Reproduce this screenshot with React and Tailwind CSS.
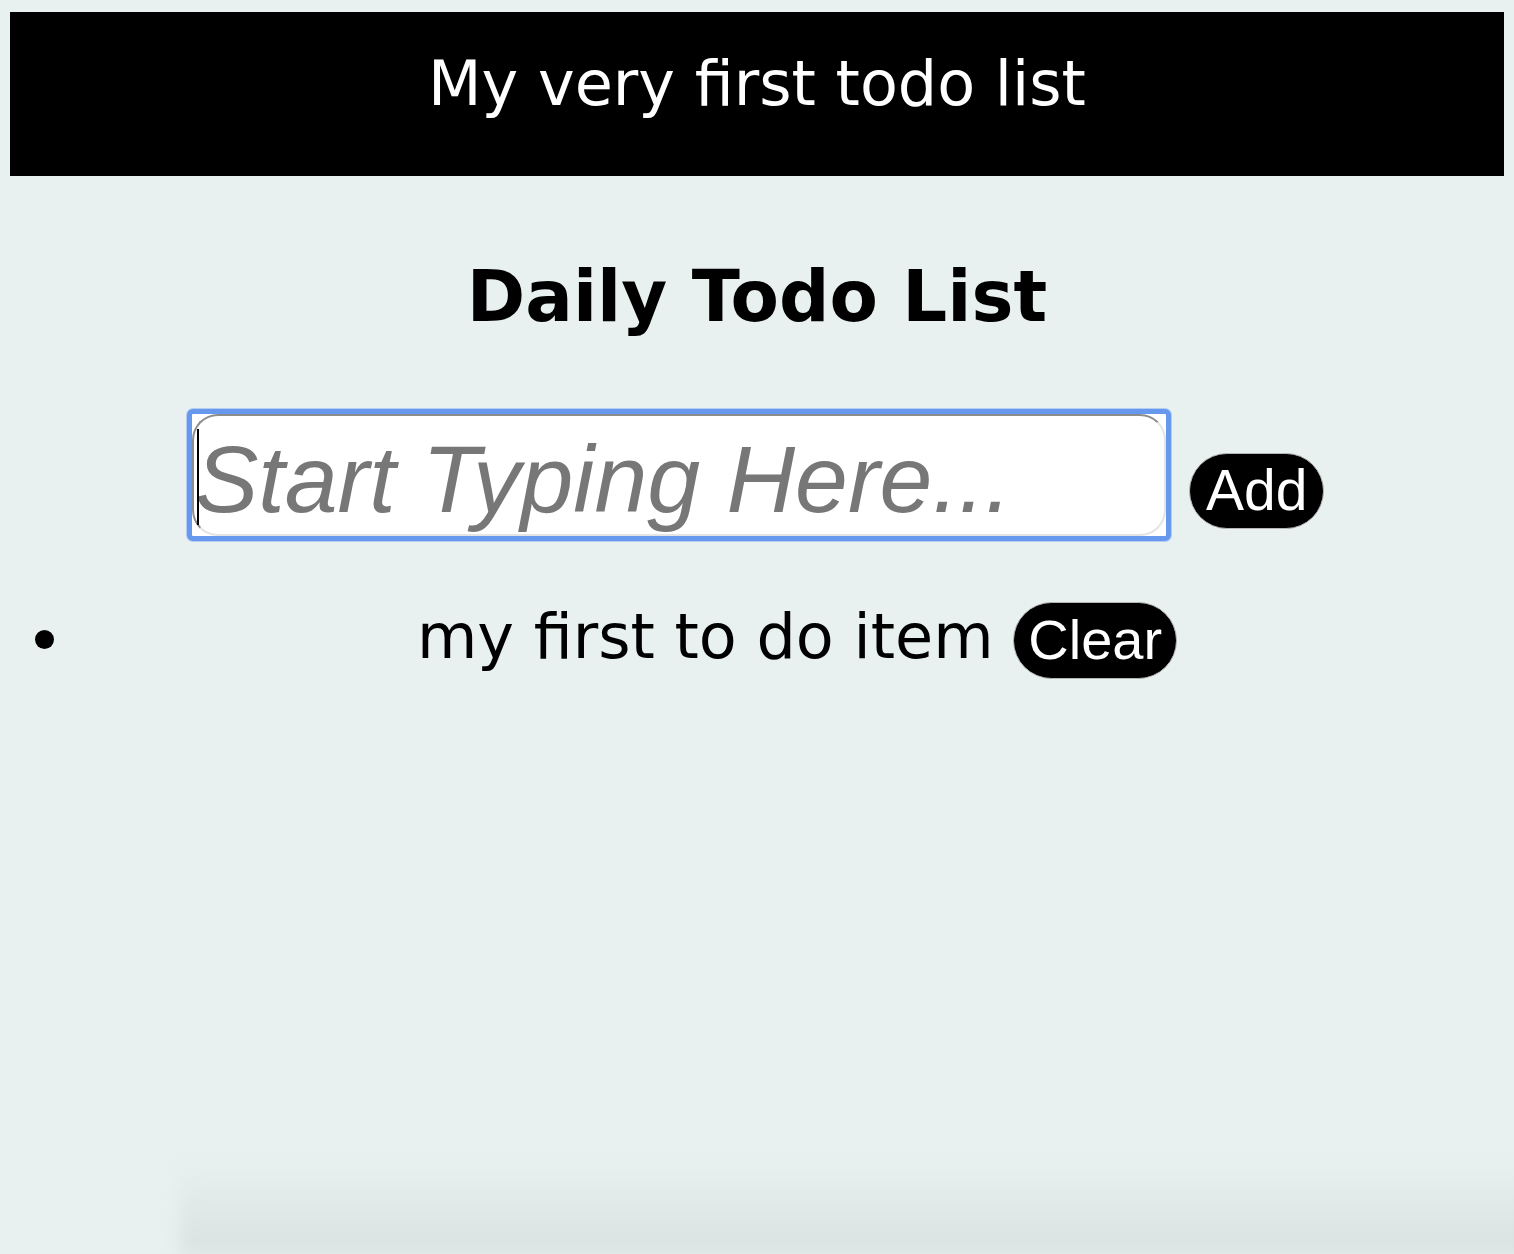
import React from "react";

export default function App() {
  return (
    <div className="relative min-h-screen overflow-hidden bg-[#e8f1f0] pt-[12px] [font-family:'DejaVu_Sans',sans-serif]">
      <header className="mx-[10px] flex h-[164px] items-center justify-center bg-black">
        <h1 className="pb-[20px] text-[62px] font-normal leading-none text-white [font-family:'DejaVu_Sans',sans-serif]">
          My very first todo list
        </h1>
      </header>

      <h2 className="mt-[86px] text-center text-[70.5px] font-bold leading-none text-black [font-family:'DejaVu_Sans',sans-serif]">
        Daily Todo List
      </h2>

      <div className="ml-[187px] mt-[76px] flex items-end">
        <div className="relative rounded-[6px] border-[5px] border-[#6699ee] bg-white shadow-[0_0_0_1px_#b3cdf5]">
          <input
            type="text"
            placeholder="Start Typing Here..."
            className="block h-[122px] w-[974px] rounded-[26px] border-[2px] border-l-[#8c8c8c] border-t-[#8c8c8c] border-r-[#e4e4e4] border-b-[#e4e4e4] bg-white pl-[1px] pt-[10px] text-[95px] italic text-black outline-none placeholder:text-[#777777] [font-family:'Liberation_Sans',Arial,sans-serif]"
          />
          <div className="pointer-events-none absolute left-[5px] top-[15px] h-[96px] w-[2px] bg-black" />
        </div>
        <button className="mb-[12px] ml-[18px] h-[76px] rounded-full border border-[#b5b5b5] bg-black px-[16px] text-[57px] leading-none text-white [font-family:'Liberation_Sans',Arial,sans-serif]">
          Add
        </button>
      </div>

      <ul className="mt-[56px] list-disc pl-[80px] text-center text-[62px] text-black [font-family:'DejaVu_Sans',sans-serif]">
        <li className="leading-[80px]">
          my first to do item{" "}
          <button className="h-[77px] rounded-full border border-[#b5b5b5] bg-black px-[14px] align-middle text-[56px] leading-none text-white [font-family:'Liberation_Sans',Arial,sans-serif]">
            Clear
          </button>
        </li>
      </ul>

      <div className="pointer-events-none absolute bottom-0 left-[180px] right-[-20px] h-[95px] bg-gradient-to-b from-transparent to-[#d8e1e0] blur-[8px]" />
    </div>
  );
}
